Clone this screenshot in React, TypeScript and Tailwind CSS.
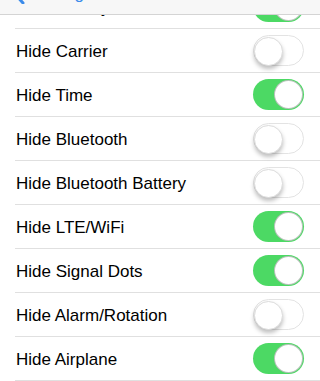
import React, { useState } from 'react';

const initial = [
  { label: 'Hide Battery', on: true },
  { label: 'Hide Carrier', on: false },
  { label: 'Hide Time', on: true },
  { label: 'Hide Bluetooth', on: false },
  { label: 'Hide Bluetooth Battery', on: false },
  { label: 'Hide LTE/WiFi', on: true },
  { label: 'Hide Signal Dots', on: true },
  { label: 'Hide Alarm/Rotation', on: false },
  { label: 'Hide Airplane', on: true },
];

const Switch: React.FC<{ on: boolean; onToggle: () => void }> = ({ on, onToggle }) => (
  <button
    onClick={onToggle}
    className={`relative w-[51px] h-[31px] rounded-full shrink-0 ${
      on ? 'bg-[#4cd964]' : 'bg-white border border-[#e3e3e3]'
    }`}
  >
    <span
      className={`absolute top-[1px] w-[29px] h-[29px] rounded-full bg-white ${
        on
          ? 'right-[1px] border border-[#8a9a8e]/60'
          : 'left-0 top-0 border border-[#dcdcdc] shadow-[0_3px_4px_rgba(0,0,0,0.25)]'
      }`}
    />
  </button>
);

export default function App() {
  const [items, setItems] = useState(initial);

  const toggle = (i: number) => {
    const updated = [...items];
    updated[i] = { ...updated[i], on: !updated[i].on };
    setItems(updated);
  };

  return (
    <div className="relative w-[320px] h-[381px] overflow-hidden bg-white font-['Liberation_Sans',Arial,sans-serif]">
      {/* nav bar, mostly scrolled off the top */}
      <div className="absolute top-0 left-0 right-0 h-[15px] z-10 bg-[#f7f7f7] border-b border-[#d4d4d4] overflow-hidden">
        <div className="flex items-center gap-[6px] pl-[13px] -mt-[19px] text-[17px] text-[#3b8bea]">
          <svg width="12" height="20" viewBox="0 0 12 20" fill="none">
            <path d="M10 1L2 10l8 9" stroke="#3b8bea" strokeWidth="3" strokeLinecap="round" strokeLinejoin="round" />
          </svg>
          <span>Settings</span>
        </div>
      </div>

      <div className="-mt-[15px]">
        {items.map((item, i) => (
          <div key={item.label} className="pl-[15px]">
            <div className="h-[44px] flex items-center justify-between pr-[16px] border-b border-[#e0e0e0]">
              <span className="pl-[1px] pt-[3px] text-[17px] text-black">{item.label}</span>
              <Switch on={item.on} onToggle={() => toggle(i)} />
            </div>
          </div>
        ))}
      </div>
    </div>
  );
}
